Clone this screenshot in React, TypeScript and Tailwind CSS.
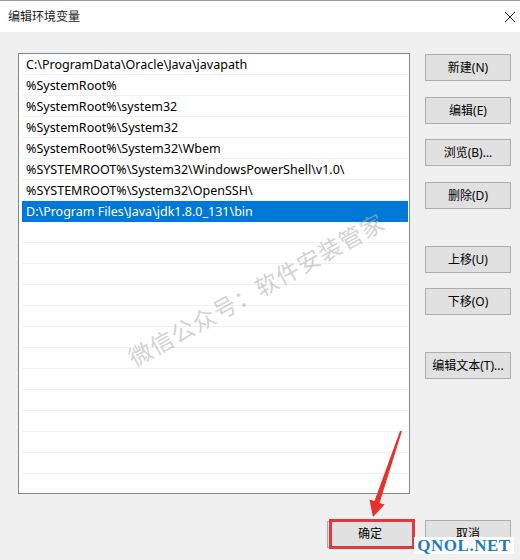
import React from 'react'

const PATHS = [
  'C:\\ProgramData\\Oracle\\Java\\javapath',
  '%SystemRoot%',
  '%SystemRoot%\\system32',
  '%SystemRoot%\\System32',
  '%SystemRoot%\\System32\\Wbem',
  '%SYSTEMROOT%\\System32\\WindowsPowerShell\\v1.0\\',
  '%SYSTEMROOT%\\System32\\OpenSSH\\',
  'D:\\Program Files\\Java\\jdk1.8.0_131\\bin',
]

const SELECTED = 7
const ROW_COUNT = 21

const font = { fontFamily: '"Noto Sans", "Noto Sans CJK SC", sans-serif' }

const Btn = ({ label, className = '' }: { label: string; className?: string }) => (
  <button className={`h-[27px] w-[86px] bg-[#e1e1e1] border border-[#adadad] text-[12px] text-black leading-none ${className}`}>
    {label}
  </button>
)

export default function App() {
  const rows = Array.from({ length: ROW_COUNT }, (_, i) => PATHS[i] ?? '')

  return (
    <div className="relative w-[520px] h-[560px] overflow-hidden bg-[#f0f0f0] flex flex-col" style={font}>
      {/* Title bar */}
      <div className="h-[32px] shrink-0 bg-white border-t border-[#9c9c9c] flex items-center justify-between pl-[8px] pr-[4px]">
        <span className="text-[12px] text-[#1a1a1a]">编辑环境变量</span>
        <svg width="12" height="12" viewBox="0 0 12 12">
          <path d="M1 1 L11 11 M11 1 L1 11" stroke="#222" strokeWidth="1" />
        </svg>
      </div>

      {/* Body */}
      <div className="flex pl-[18px] pt-[21px]">
        {/* List */}
        <div className="w-[392px] h-[441px] bg-white border border-[#828790] overflow-hidden pl-[3px] pr-px">
          {rows.map((p, i) => (
            <div
              key={i}
              className={`h-[21px] flex items-center pl-[4px] pt-[2px] text-[12.5px] whitespace-nowrap border-b ${
                i === SELECTED ? 'bg-[#0078d7] text-white border-[#0078d7]' : 'text-black border-[#f0f0f0]'
              }`}
            >
              {p}
            </div>
          ))}
        </div>

        {/* Side buttons */}
        <div className="flex flex-col ml-[15px] pt-px">
          <Btn label="新建(N)" />
          <Btn label="编辑(E)" className="mt-[16px]" />
          <Btn label="浏览(B)..." className="mt-[15px]" />
          <Btn label="删除(D)" className="mt-[16px]" />
          <Btn label="上移(U)" className="mt-[37px]" />
          <Btn label="下移(O)" className="mt-[15px]" />
          <Btn label="编辑文本(T)..." className="mt-[37px]" />
        </div>
      </div>

      {/* Bottom buttons */}
      <div className="flex justify-end gap-[12px] pr-[9px] mt-[26px]">
        <div className="relative">
          <Btn label="确定" />
          <div className="absolute left-[2px] -right-[2px] -top-px -bottom-px border-[3px] border-[#e0393b]" />
        </div>
        <Btn label="取消" />
      </div>

      {/* Diagonal watermark */}
      <div
        className="absolute left-[256px] top-[289px] -translate-x-1/2 -translate-y-1/2 -rotate-[29deg] whitespace-nowrap text-[23px] tracking-[1px] text-[#b4b4b4]/60 pointer-events-none"
        style={{ fontFamily: '"Noto Sans CJK SC", sans-serif' }}
      >
        微信公众号：软件安装管家
      </div>

      {/* Red arrow */}
      <svg className="absolute left-0 top-0 pointer-events-none" width="520" height="560">
        <polygon
          points="401.9,431.3 400.1,430.7 374.5,501 369.4,499.5 373,517 384.6,504.5 379.6,503"
          fill="#e8312b"
        />
      </svg>

      {/* Site watermark */}
      <div
        className="absolute left-[414px] top-[537px] h-[17px] w-[100px] bg-white flex items-center justify-center text-[17px] font-bold tracking-[0.5px] text-[#1f7ac6] leading-none"
        style={{ fontFamily: '"Liberation Serif", serif' }}
      >
        QNOL.NET
      </div>
    </div>
  )
}
